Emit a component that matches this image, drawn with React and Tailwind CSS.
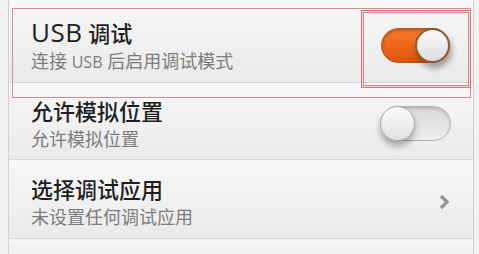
import React from 'react';

const font = { fontFamily: '"Open Sans", "Noto Sans CJK SC", sans-serif' };

const Toggle = ({ on }) => (
  <div className="relative w-[71px] h-[36px]">
    {on ? (
      <>
        <div className="absolute left-[1px] top-0 w-[69px] h-[35px] rounded-full border border-[#b4531b] bg-gradient-to-b from-[#f57a2c] via-[#ee6718] to-[#dc5410] shadow-[inset_0_2px_3px_rgba(0,0,0,0.25)]" />
        <div className="absolute right-[1px] top-0 w-[35px] h-[35px] rounded-full border-2 border-[#8d5a34] bg-gradient-to-b from-[#fbfbfb] to-[#dcdcdc] shadow-[2px_5px_6px_rgba(0,0,0,0.35)]" />
      </>
    ) : (
      <>
        <div className="absolute left-[2px] top-0 w-[69px] h-[35px] rounded-full border border-[#b3b3b3] bg-gradient-to-b from-[#d9d9d9] to-[#eeeeee] shadow-[inset_0_2px_3px_rgba(0,0,0,0.15)]" />
        <div className="absolute left-0 top-0 w-[35px] h-[35px] rounded-full border border-[#a5a5a5] bg-gradient-to-b from-[#fafafa] to-[#e2e2e2] shadow-[0_5px_6px_rgba(0,0,0,0.3)]" />
      </>
    )}
  </div>
);

const Chevron = () => (
  <svg width="12" height="18" viewBox="0 0 12 18" className="mr-[1px]">
    <polyline points="3,3 9,9 3,15" fill="none" stroke="#939393" strokeWidth="3.2" strokeLinejoin="miter" />
  </svg>
);

const Row = ({ title, sub, right, className }) => (
  <div className={`flex items-center justify-between pl-[22px] pr-[22px] border-b border-[#d6d6d6] bg-gradient-to-b from-[#f7f7f7] to-[#eaeaea] ${className}`}>
    <div>
      <div className="text-[22px] leading-[30px] font-medium text-[#1e1e1e]">{title}</div>
      <div className="text-[18px] leading-[26px] text-[#7c7c7c]">{sub}</div>
    </div>
    {right}
  </div>
);

export default function App() {
  return (
    <div className="relative w-[479px] h-[254px] overflow-hidden bg-[#f1f1f1]" style={font}>
      <div className="ml-[8px] w-[466px] h-full border-l border-r border-[#d2d2d2]">
        <Row
          className="h-[83px] pt-[10px]"
          title={<><span className="text-[26px] font-normal tracking-[0.5px]">USB</span> 调试</>}
          sub={<>连接 <span className="text-[16px]">USB</span> 后启用调试模式</>}
          right={<Toggle on />}
        />
        <Row
          className="h-[77px] pt-[6px]"
          title="允许模拟位置"
          sub="允许模拟位置"
          right={<Toggle />}
        />
        <Row
          className="h-[79px] pt-[6px]"
          title="选择调试应用"
          sub="未设置任何调试应用"
          right={<Chevron />}
        />
        <div className="h-[15px] bg-gradient-to-b from-[#f7f7f7] to-[#f0f0f0]" />
      </div>

      {/* annotation boxes */}
      <div className="absolute left-[12px] top-[8px] w-[459px] h-[90px] border-[1.5px] border-solid border-[#d98990] pointer-events-none" />
      <div className="absolute left-[361px] top-[10px] w-[110px] h-[78px] border-[1.5px] border-solid border-[#d77981] shadow-[inset_0_0_0_1px_rgba(255,255,255,0.6),inset_0_0_0_2px_#d98a91] pointer-events-none" />
    </div>
  );
}
